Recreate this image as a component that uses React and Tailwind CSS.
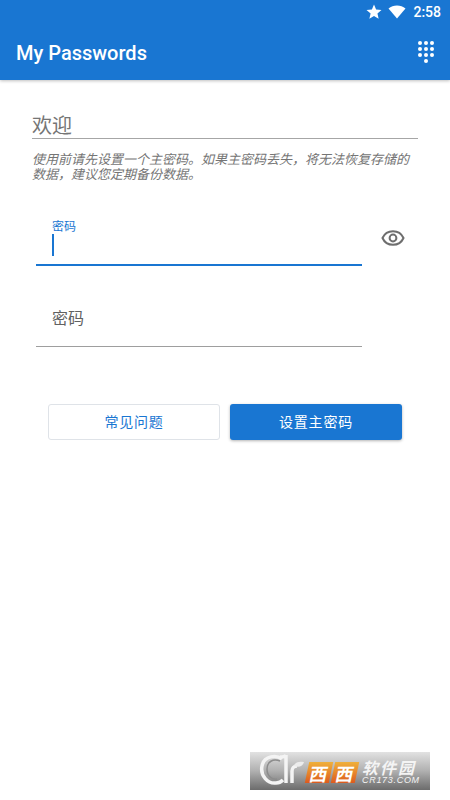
import React from 'react';

const cjk = { fontFamily: 'Roboto, "Noto Sans CJK SC", sans-serif' };
const cjkOnly = { fontFamily: '"Noto Sans CJK SC", sans-serif' };

function StatusBar() {
  return (
    <div className="h-6 flex items-center justify-end pr-[9px] text-white">
      <svg width="18" height="18" viewBox="0 0 24 24" fill="currentColor" className="mr-[5px]">
        <path d="M12 17.3l6.2 3.7-1.6-7L22 9.2l-7.2-.6L12 2 9.2 8.6 2 9.2 7.5 14l-1.700 7z" />
      </svg>
      <svg width="18" height="14" viewBox="0 0 18 14" fill="currentColor" className="mr-[7px]">
        <path d="M9 13.500L0.500 3.400C2.800 1.500 5.800 0.400 9 0.400s6.200 1.100 8.500 3z" />
      </svg>
      <span className="text-sm font-medium leading-none">2:58</span>
    </div>
  );
}

function Dialpad() {
  const dots = [0, 1, 2, 3, 4, 5, 6, 7, 8];
  return (
    <div className="flex flex-col items-center gap-[2px]">
      <div className="grid grid-cols-3 gap-[2px]">
        {dots.map((d) => (
          <span key={d} className="w-[4px] h-[4px] rounded-full bg-white" />
        ))}
      </div>
      <span className="w-[4px] h-[4px] rounded-full bg-white" />
    </div>
  );
}

function Watermark() {
  return (
    <div className="absolute left-[250px] top-[752px] w-[180px] h-[38px] flex items-center bg-gradient-to-b from-[#e2e2e2] via-[#b0b0b0] to-[#6c6c6c] overflow-hidden">
      <svg width="46" height="34" viewBox="0 0 46 34" fill="none" className="ml-[9px] shrink-0">
        <path d="M23 5C18 1 5 1 3 12c-2 10 6 18 14 17 3 0 5-1 7-3" stroke="#f4f4f4" strokeWidth="3.500" />
        <path d="M21 7C14 4 8 8 8 15c0 7 5 11 10 10" stroke="#8c8c8c" strokeWidth="1.500" />
        <path d="M27 1c-1 2-4 2-6 2M27 1v28" stroke="#f4f4f4" strokeWidth="3.500" />
        <path d="M33 29V17c0-3 2-5 5-5" stroke="#f4f4f4" strokeWidth="3.500" />
        <path d="M35 12c1-4 5-5 10-4-1 4-5 6-10 4z" fill="#ececec" />
      </svg>
      <div className="flex gap-[2px] ml-[2px] mt-[2px]">
        <span className="w-[24px] h-[21px] -skew-x-12 flex items-center justify-center bg-gradient-to-b from-[#efb03a] to-[#dc5a1e] text-[18px] leading-none font-bold text-white" style={cjkOnly}>西</span>
        <span className="w-[24px] h-[21px] -skew-x-12 flex items-center justify-center bg-gradient-to-b from-[#efb03a] to-[#dc5a1e] text-[18px] leading-none font-bold text-white" style={cjkOnly}>西</span>
      </div>
      <div className="flex flex-col items-start ml-[5px] mt-[1px] text-[#f4f4f4] italic">
        <span className="text-[16px] leading-[16px] font-bold tracking-[2px]" style={cjkOnly}>软件园</span>
        <span className="text-[9px] leading-[10px] tracking-[0.700px]" style={{ fontFamily: '"Liberation Sans", sans-serif' }}>CR173.COM</span>
      </div>
    </div>
  );
}

export default function App() {
  return (
    <div className="relative w-[450px] h-[800px] bg-white overflow-hidden" style={cjk}>
      <div className="h-20 bg-[#1976d2] shadow-[0_1px_3px_rgba(0,0,0,0.25)]">
        <StatusBar />
        <div className="h-14 flex items-center justify-between pl-4 pr-[16px]">
          <h1 className="mt-[2px] text-xl font-medium text-white">My Passwords</h1>
          <Dialpad />
        </div>
      </div>

      <div className="pt-8 px-8">
        <div className="w-[386px] border-b border-[#a6a6a6] h-[27px] text-xl leading-[28px] text-[#757575]">欢迎</div>
        <p className="mt-[13px] w-[386px] text-[13px] leading-[15px] italic text-[#757575]">
          使用前请先设置一个主密码。如果主密码丢失，将无法恢复存储的数据，建议您定期备份数据。
        </p>
      </div>

      <div className="mt-[22px] ml-9 flex items-start">
        <div className="w-[326px] h-[62px] border-b-2 border-[#1976d2] pl-4 pt-[16px]">
          <div className="text-xs leading-[14px] text-[#1976d2]">密码</div>
          <div className="w-[2px] h-[22px] bg-[#1976d2]" />
        </div>
        <svg width="24" height="24" viewBox="0 0 24 24" fill="none" stroke="#6e6e6e" strokeWidth="2" className="ml-[19px] mt-[22px]">
          <path d="M1.500 12C3.500 7.500 7.500 5.200 12 5.200s8.500 2.300 10.500 6.800c-2 4.500-6 6.800-10.500 6.800S3.500 16.500 1.500 12z" />
          <circle cx="12" cy="12" r="3.400" />
        </svg>
      </div>

      <div className="mt-[18px] ml-9 w-[326px] h-[63px] border-b border-[#9e9e9e] pl-4 pt-[24px] text-base leading-[22px] text-[#616161]">
        密码
      </div>

      <div className="mt-[57px] ml-12 flex gap-[10px]">
        <button className="w-[172px] h-9 rounded-[3px] border border-[#dfe3e8] bg-white text-sm tracking-[0.8px] text-[#1976d2]">
          常见问题
        </button>
        <button className="w-[172px] h-9 rounded-[3px] bg-[#1976d2] shadow-[0_1px_3px_rgba(0,0,0,0.3)] text-sm tracking-[0.8px] text-white">
          设置主密码
        </button>
      </div>

      <Watermark />
    </div>
  );
}
